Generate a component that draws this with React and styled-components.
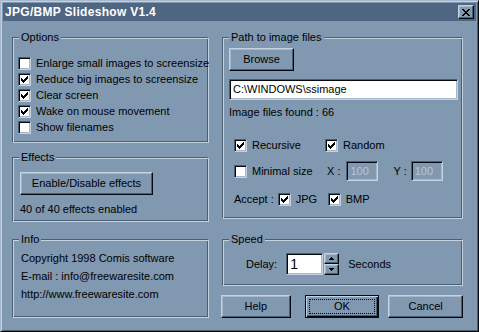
import React from 'react';
import styled, { createGlobalStyle } from 'styled-components';

const C = {
  face: '#8098b0',
  title: '#4e6682',
  hi: '#c4d2e0',
  lite: '#a8b8ca',
  shadow: '#4c5e72',
  dark: '#05080c',
  disabled: '#b8c6d4',
};

const Global = createGlobalStyle`
  html, body { margin: 0; padding: 0; background: ${C.face}; }
  body { font-family: "Liberation Sans", Arial, sans-serif; font-size: 11px; color: #000; }
  * { box-sizing: border-box; }
`;

const Pixels = ({ rows, color = '#000' }) => {
  const w = rows[0].length;
  const h = rows.length;
  let d = '';
  rows.forEach((r, y) =>
    [...r].forEach((c, x) => {
      if (c === 'X') d += `M${x} ${y}h1v1h-1z`;
    })
  );
  return (
    <svg width={w} height={h} viewBox={`0 0 ${w} ${h}`} shapeRendering="crispEdges" style={{ display: 'block' }}>
      <path d={d} fill={color} />
    </svg>
  );
};

const CHECK = ['......X', '.....XX', 'X...XXX', 'XX.XXX.', 'XXXXX..', '.XXX...', '..X....'];
const CLOSE = ['XX....XX', '.XX..XX.', '..XXXX..', '...XX...', '..XXXX..', '.XX..XX.', 'XX....XX'];
const UP = ['..X..', '.XXX.', 'XXXXX'];
const DOWN = ['XXXXX', '.XXX.', '..X..'];

const Window = styled.div`
  width: 479px;
  height: 332px;
  background: ${C.face};
  border: 1px solid;
  border-color: ${C.lite} ${C.dark} ${C.dark} ${C.lite};
  box-shadow: inset 1px 1px ${C.hi}, inset -1px -1px ${C.shadow};
  padding: 2px;
  display: flex;
  flex-direction: column;
`;

const TitleBar = styled.div`
  height: 18px;
  flex: none;
  background: ${C.title};
  display: flex;
  align-items: center;
  justify-content: space-between;
  padding: 0 2px;
`;

const TitleText = styled.span`
  color: #fff;
  font-weight: bold;
  font-size: 12px;
  letter-spacing: 0.3px;
`;

const Raised = styled.button`
  font: inherit;
  color: #000;
  background: ${C.face};
  border: 1px solid;
  border-color: ${C.hi} ${C.dark} ${C.dark} ${C.hi};
  box-shadow: inset -1px -1px ${C.shadow}, inset 1px 1px ${C.lite};
  padding: 0;
  margin: 0;
  display: flex;
  align-items: center;
  justify-content: center;
  position: relative;
  line-height: 13px;
`;

const CloseBtn = styled(Raised)`
  width: 16px;
  height: 14px;
`;

const Content = styled.div`
  flex: 1;
  display: flex;
  gap: 13px;
  padding: 16px 0 0 9px;
`;

const Column = styled.div`
  width: ${(p) => p.$w}px;
  display: flex;
  flex-direction: column;
`;

const Group = styled.div`
  position: relative;
  height: ${(p) => p.$h}px;
  margin-top: ${(p) => p.$mt || 0}px;
  border: 1px solid;
  border-color: ${C.shadow} ${C.hi} ${C.hi} ${C.shadow};
  box-shadow: inset 1px 1px ${C.hi}, inset -1px -1px ${C.shadow};
  padding: ${(p) => p.$pad};
  display: flex;
  flex-direction: column;
  align-items: flex-start;
`;

const Legend = styled.span`
  position: absolute;
  top: -7px;
  left: 6px;
  padding: 0 2px;
  background: ${C.face};
  line-height: 13px;
`;

const Row = styled.div`
  display: flex;
  align-items: center;
  height: ${(p) => p.$h || 16}px;
  margin-top: ${(p) => p.$mt || 0}px;
  padding-left: ${(p) => p.$pl || 0}px;
  line-height: 13px;
  white-space: nowrap;
`;

const Label = styled.label`
  display: flex;
  align-items: center;
  width: ${(p) => (p.$w ? `${p.$w}px` : 'auto')};
  line-height: 13px;
  white-space: nowrap;
`;

const Box = styled.span`
  width: 13px;
  height: 13px;
  flex: none;
  background: #fff;
  border: 1px solid;
  border-color: ${C.shadow} ${C.hi} ${C.hi} ${C.shadow};
  box-shadow: inset 1px 1px ${C.dark}, inset -1px -1px ${C.lite};
  display: flex;
  align-items: center;
  justify-content: center;
  margin-right: 5px;
`;

const CheckBox = ({ checked, children, w }) => (
  <Label $w={w}>
    <Box>{checked && <Pixels rows={CHECK} />}</Box>
    {children}
  </Label>
);

const Text = styled.div`
  line-height: 13px;
  margin-top: ${(p) => p.$mt || 0}px;
  margin-left: ${(p) => p.$ml || 0}px;
  margin-right: ${(p) => p.$mr || 0}px;
  white-space: nowrap;
`;

const Btn = styled(Raised)`
  width: ${(p) => p.$w}px;
  height: 23px;
  margin-top: ${(p) => p.$mt || 0}px;
  margin-left: ${(p) => p.$ml || 0}px;
  ${(p) =>
    p.$default &&
    `
    border-color: ${C.dark};
    box-shadow: inset 1px 1px ${C.hi}, inset -1px -1px ${C.dark}, inset -2px -2px ${C.shadow};
    &::after {
      content: '';
      position: absolute;
      inset: 3px;
      border: 1px dotted #000;
    }
  `}
`;

const Field = styled.div`
  width: ${(p) => p.$w}px;
  height: ${(p) => p.$h || 21}px;
  margin-top: ${(p) => p.$mt || 0}px;
  margin-left: ${(p) => p.$ml || 0}px;
  background: ${(p) => (p.$disabled ? C.face : '#fff')};
  color: ${(p) => (p.$disabled ? C.disabled : '#000')};
  border: 1px solid;
  border-color: ${C.shadow} ${C.hi} ${C.hi} ${C.shadow};
  box-shadow: inset 1px 1px ${C.dark}, inset -1px -1px ${C.lite};
  padding: 0 3px;
  display: flex;
  align-items: center;
  line-height: 13px;
  font-size: ${(p) => (p.$big ? 14 : 11)}px;
  white-space: nowrap;
`;

const Spin = styled.div`
  display: flex;
  flex-direction: column;
  height: 22px;
  margin-left: 1px;
`;

const SpinBtn = styled(Raised)`
  width: 15px;
  height: 11px;
`;

const ButtonsRow = styled.div`
  display: flex;
  margin-top: 9px;
  margin-left: -1px;
`;

export default function App() {
  return (
    <>
      <Global />
      <Window>
        <TitleBar>
          <TitleText>JPG/BMP Slideshow V1.4</TitleText>
          <CloseBtn aria-label="Close">
            <Pixels rows={CLOSE} />
          </CloseBtn>
        </TitleBar>
        <Content>
          <Column $w={197}>
            <Group $h={106} $pad="17px 0 0 5px">
              <Legend>Options</Legend>
              <Row><CheckBox>Enlarge small images to screensize</CheckBox></Row>
              <Row><CheckBox checked>Reduce big images to screensize</CheckBox></Row>
              <Row><CheckBox checked>Clear screen</CheckBox></Row>
              <Row><CheckBox checked>Wake on mouse movement</CheckBox></Row>
              <Row><CheckBox>Show filenames</CheckBox></Row>
            </Group>
            <Group $h={65} $mt={14} $pad="14px 0 0 7px">
              <Legend>Effects</Legend>
              <Btn $w={133}>Enable/Disable effects</Btn>
              <Text $mt={8}>40 of 40 effects enabled</Text>
            </Group>
            <Group $h={79} $mt={17} $pad="12px 0 0 8px">
              <Legend>Info</Legend>
              <Text>Copyright 1998 Comis software</Text>
              <Text $mt={5}>E-mail : info@freewaresite.com</Text>
              <Text $mt={5}>http://www.freewaresite.com</Text>
            </Group>
          </Column>
          <Column $w={241}>
            <Group $h={182} $pad="10px 4px 0 6px">
              <Legend>Path to image files</Legend>
              <Btn $w={65}>Browse</Btn>
              <Field $w={229} $mt={8}>C:\WINDOWS\ssimage</Field>
              <Text $mt={6}>Image files found : 66</Text>
              <Row $h={20} $mt={16} $pl={5}>
                <CheckBox checked w={91}>Recursive</CheckBox>
                <CheckBox checked>Random</CheckBox>
              </Row>
              <Row $h={20} $mt={6} $pl={5}>
                <CheckBox w={93}>Minimal size</CheckBox>
                <Text>X :</Text>
                <Field $w={32} $h={20} $ml={6} $disabled>100</Field>
                <Text $ml={15}>Y :</Text>
                <Field $w={32} $h={20} $ml={4} $disabled>100</Field>
              </Row>
              <Row $h={20} $mt={8} $pl={5}>
                <Text $mr={4}>Accept :</Text>
                <CheckBox checked w={50}>JPG</CheckBox>
                <CheckBox checked>BMP</CheckBox>
              </Row>
            </Group>
            <Group $h={47} $mt={20} $pad="13px 0 0 23px">
              <Legend>Speed</Legend>
              <Row $h={22}>
                <Text>Delay:</Text>
                <Field $w={37} $h={22} $ml={9} $big>1</Field>
                <Spin>
                  <SpinBtn aria-label="Up"><Pixels rows={UP} /></SpinBtn>
                  <SpinBtn aria-label="Down"><Pixels rows={DOWN} /></SpinBtn>
                </Spin>
                <Text $ml={9}>Seconds</Text>
              </Row>
            </Group>
            <ButtonsRow>
              <Btn $w={70}>Help</Btn>
              <Btn $w={75} $ml={14} $default>OK</Btn>
              <Btn $w={75} $ml={9}>Cancel</Btn>
            </ButtonsRow>
          </Column>
        </Content>
      </Window>
    </>
  );
}
